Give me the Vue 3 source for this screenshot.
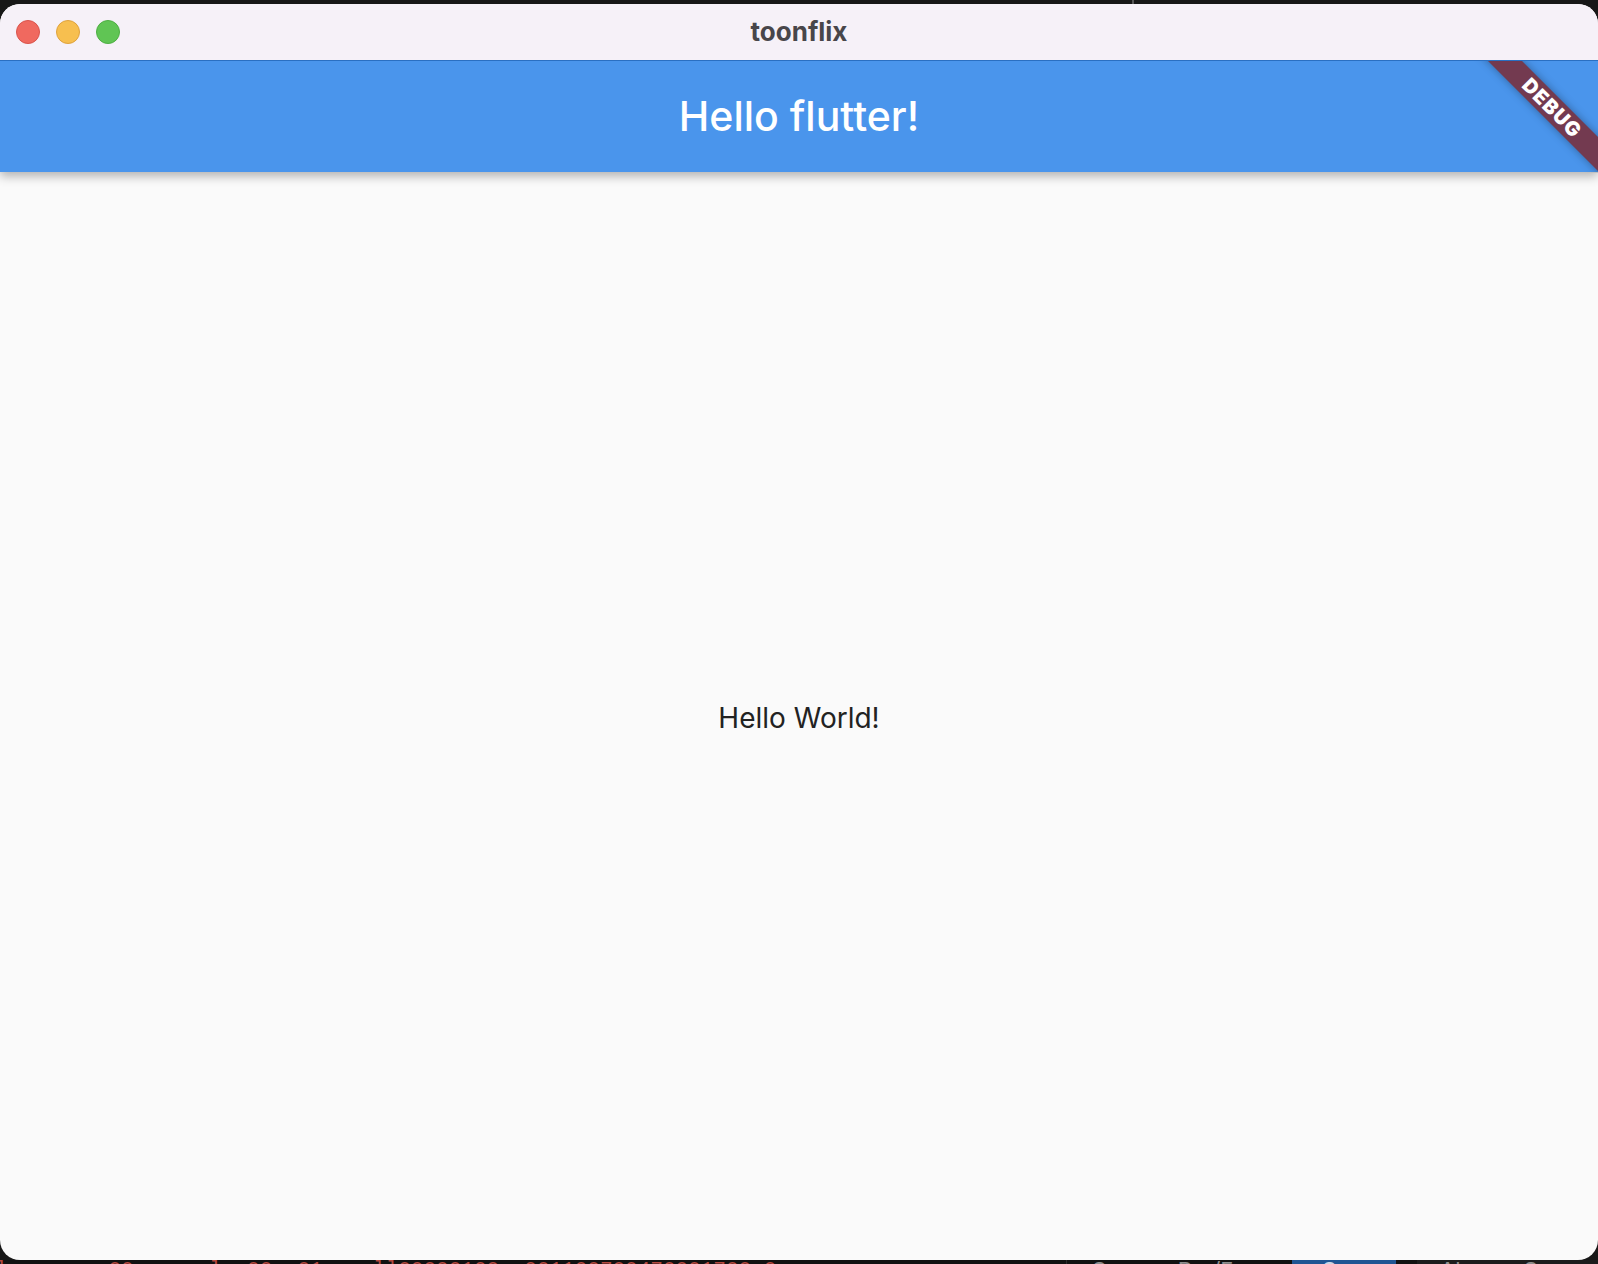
<script setup>
const title = 'toonflix'
const log = 'l        00      l  00  01    ll00000100  001100700470001700 0'
</script>

<template>
  <div class="desk">
    <i class="tick"></i>
    <div class="strip">
      <span class="log">{{ log }}</span>
      <div class="tab wide"><span>O</span><span class="gap">D . /F</span></div>
      <div class="tab active"><span>O</span></div>
      <div class="tab last"><span>Al</span><span class="gap2">O</span></div>
    </div>
    <div class="window">
      <header class="titlebar">
        <div class="lights">
          <i class="light r"></i><i class="light y"></i><i class="light g"></i>
        </div>
        <span class="wintitle">{{ title }}</span>
      </header>
      <div class="app">
        <div class="appbar"><h1>Hello flutter!</h1></div>
        <main class="body"><p>Hello World!</p></main>
        <div class="banner"><span>DEBUG</span></div>
      </div>
    </div>
  </div>
</template>

<style>
html, body { margin: 0; background: #111; }
</style>

<style scoped>
.desk {
  position: relative;
  width: 1598px;
  height: 1264px;
  box-sizing: border-box;
  padding: 4px 0;
  overflow: hidden;
  background: #171717;
  font-family: Inter, "Liberation Sans", sans-serif;
}
.tick {
  position: absolute;
  left: 1132px;
  top: 0;
  width: 2px;
  height: 4px;
  background: #555;
}
.strip {
  position: absolute;
  left: 0;
  right: 0;
  top: 1260px;
  height: 30px;
  display: flex;
  background: #111;
  font-size: 22px;
  line-height: 20px;
}
.log {
  flex: 0 0 1071px;
  margin-left: -5px;
  color: #b5483f;
  white-space: pre;
  font-family: "Liberation Mono", monospace;
  font-size: 21px;
}
.tab {
  display: flex;
  color: #8d8d8d;
  box-sizing: border-box;
}
.wide {
  flex: 0 0 226px;
  padding-left: 24px;
  border-left: 1px solid #2a2a2a;
}
.gap { margin-left: 70px; }
.active {
  flex: 0 0 104px;
  padding-left: 29px;
  background: #1f5593;
  color: #c9d6e6;
}
.last {
  flex: 1;
  margin-left: 21px;
  padding-left: 23px;
  background: #1c1c1c;
}
.gap2 { margin-left: 62px; }
.window {
  position: relative;
  height: 1256px;
  display: flex;
  flex-direction: column;
  background: #fafafa;
  border-radius: 20px;
  overflow: hidden;
}
.titlebar {
  position: relative;
  flex: 0 0 56px;
  display: flex;
  align-items: center;
  justify-content: center;
  padding-bottom: 2px;
  box-sizing: border-box;
  background: #f6f1f8;
}
.lights {
  position: absolute;
  left: 16px;
  top: 16px;
  display: flex;
  gap: 16px;
}
.light {
  display: block;
  width: 24px;
  height: 24px;
  box-sizing: border-box;
  border-radius: 50%;
  border: 1px solid;
}
.r { background: #f0695f; border-color: #d9544c; }
.y { background: #f7bf4f; border-color: #dea23d; }
.g { background: #60c554; border-color: #4eae43; }
.wintitle {
  font-size: 26px;
  font-weight: 700;
  color: #48464a;
}
.app {
  position: relative;
  flex: 1;
  display: flex;
  flex-direction: column;
  overflow: hidden;
  border-top: 1px solid #2a6fc2;
}
.appbar {
  position: relative;
  flex: 0 0 111px;
  display: flex;
  align-items: center;
  justify-content: center;
  padding-bottom: 2px;
  box-sizing: border-box;
  background: #4a95ec;
  box-shadow: 0 4px 10px rgba(0, 0, 0, 0.3);
}
.appbar h1 {
  margin: 0;
  font-size: 41px;
  font-weight: 550;
  color: #fff;
}
.body {
  flex: 1;
  display: flex;
  align-items: center;
  justify-content: center;
  padding-top: 4px;
}
.body p {
  margin: 0;
  font-size: 28px;
  color: #222;
}
.banner {
  position: absolute;
  top: 0;
  right: 0;
  width: 160px;
  height: 112px;
  overflow: hidden;
  pointer-events: none;
}
.banner span {
  position: absolute;
  left: 4px;
  top: 35px;
  width: 220px;
  height: 24px;
  transform: rotate(45deg);
  display: flex;
  align-items: center;
  justify-content: center;
  background: #733a50;
  box-shadow: 0 0 8px rgba(0, 0, 0, 0.35);
  color: #fff;
  font-size: 20px;
  font-weight: 900;
  letter-spacing: 1px;
}
</style>
